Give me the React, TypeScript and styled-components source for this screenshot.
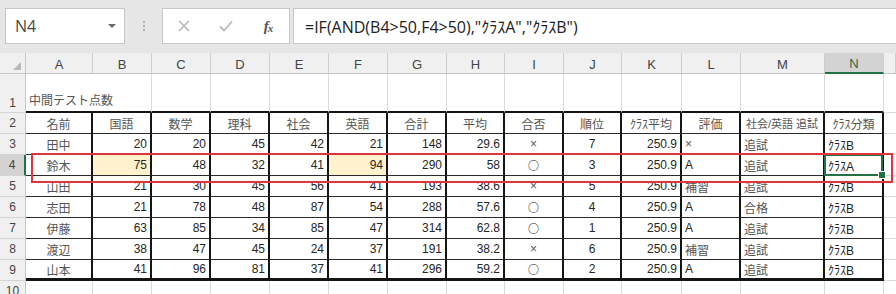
import { FC } from "react";
import styled, { createGlobalStyle } from "styled-components";

const GlobalStyle = createGlobalStyle`
  html, body {
    margin: 0;
    padding: 0;
    background: #e6e6e6;
    overflow: hidden;
  }
  * {
    box-sizing: border-box;
  }
`;

const Page = styled.div`
  width: 896px;
  height: 294px;
  overflow: hidden;
  background: #e6e6e6;
  font-family: "Liberation Sans", "Noto Sans CJK JP", sans-serif;
`;

/* ---------- formula toolbar ---------- */

const Toolbar = styled.div`
  display: flex;
  align-items: stretch;
  height: 53px;
  padding: 8px 0 9px 5px;
`;

const NameBox = styled.div`
  width: 120px;
  display: flex;
  align-items: center;
  justify-content: space-between;
  padding: 0 8px 0 9px;
  background: #fff;
  border: 1px solid #c6c6c6;
  color: #4a4a4a;
  font-family: "Open Sans", "Liberation Sans", sans-serif;
  font-size: 16px;
`;

const Caret = styled.span`
  width: 0;
  height: 0;
  border-left: 4px solid transparent;
  border-right: 4px solid transparent;
  border-top: 4px solid #6a6a6a;
`;

const Grip = styled.div`
  width: 37px;
  display: flex;
  flex-direction: column;
  align-items: center;
  justify-content: center;
  gap: 2px;

  span {
    width: 2px;
    height: 2px;
    border-radius: 1px;
    background: #9a9a9a;
  }
`;

const IconBox = styled.div`
  width: 128px;
  display: flex;
  align-items: center;
  background: #fff;
  border: 1px solid #c6c6c6;
`;

const IconSlot = styled.div`
  width: 42px;
  display: flex;
  align-items: center;
  justify-content: center;
`;

const Fx = styled.span`
  font-family: "Liberation Serif", serif;
  font-style: italic;
  font-weight: bold;
  font-size: 15px;
  color: #555;
  letter-spacing: -1px;

  sub {
    font-size: 11px;
    vertical-align: -1px;
  }
`;

const FormulaBox = styled.div`
  flex: 1;
  margin-left: 3px;
  margin-right: -2px;
  display: flex;
  align-items: center;
  padding-left: 11px;
  background: #fff;
  border: 1px solid #c6c6c6;
  color: #222;
  font-family: "Open Sans", "Noto Sans CJK JP", sans-serif;
  font-size: 16px;
  white-space: nowrap;
`;

/* ---------- sheet ---------- */

const Sheet = styled.div`
  position: relative;
  display: grid;
  grid-template-columns: 26px 67px 59px 59px 59px 59px 59px 59px 58px 59px 58px 60px 59px 84px 59px 1fr;
  grid-template-rows: 21px 39px repeat(8, 21px) 21px;
  background: #fff;
`;

const Corner = styled.div`
  position: relative;
  background: #f0f0f0;
  border-right: 1px solid #c6c6c6;
  border-bottom: 1px solid #c6c6c6;

  &::after {
    content: "";
    position: absolute;
    right: 4px;
    bottom: 3px;
    width: 0;
    height: 0;
    border-left: 8px solid transparent;
    border-bottom: 8px solid #b8b8b8;
  }
`;

const ColHead = styled.div<{ $active?: boolean }>`
  display: flex;
  align-items: center;
  justify-content: center;
  padding-top: 2px;
  background: ${(p) => (p.$active ? "#d3d3d3" : "#f0f0f0")};
  border-right: 1px solid #cdcdcd;
  border-bottom: ${(p) => (p.$active ? "2px solid #217346" : "1px solid #c6c6c6")};
  color: ${(p) => (p.$active ? "#2a6a45" : "#444")};
  font-size: 13px;
`;

const RowHead = styled.div<{ $active?: boolean; $tall?: boolean }>`
  display: flex;
  align-items: ${(p) => (p.$tall ? "flex-end" : "center")};
  justify-content: center;
  padding-bottom: ${(p) => (p.$tall ? "2px" : "0")};
  background: ${(p) => (p.$active ? "#d3d3d3" : "#f0f0f0")};
  border-right: ${(p) => (p.$active ? "2px solid #217346" : "1px solid #c6c6c6")};
  border-bottom: 1px solid #d4d4d4;
  color: #444;
  font-size: 12px;
`;

type Align = "left" | "center" | "right";

const justify = { left: "flex-start", center: "center", right: "flex-end" };

const Cell = styled.div<{
  $align?: Align;
  $fill?: string;
  $right?: string;
  $bottom?: string;
  $tall?: boolean;
  $size?: number;
  $span?: number;
  $muted?: boolean;
  $cjk?: boolean;
  $selected?: boolean;
}>`
  position: relative;
  grid-column: span ${(p) => p.$span ?? 1};
  display: flex;
  align-items: ${(p) => (p.$tall ? "flex-end" : "center")};
  justify-content: ${(p) => justify[p.$align ?? "left"]};
  padding: ${(p) => (p.$tall ? "0 3px 3px" : "0 3px")};
  background: ${(p) => p.$fill ?? "#fff"};
  border-right: ${(p) => p.$right ?? "1px solid #dadada"};
  border-bottom: ${(p) => p.$bottom ?? "1px solid #dadada"};
  color: ${(p) => (p.$muted ? "#555" : "#262626")};
  font-family: ${(p) =>
    p.$cjk ? `"Noto Sans CJK JP", sans-serif` : `"Liberation Sans", "Noto Sans CJK JP", sans-serif`};
  font-weight: ${(p) => (p.$cjk ? 700 : 400)};
  font-size: ${(p) => p.$size ?? 12}px;
  white-space: nowrap;

  ${(p) =>
    p.$selected &&
    `
    &::after {
      content: "";
      position: absolute;
      inset: -1px;
      border: 2px solid #217346;
      pointer-events: none;
    }
    &::before {
      content: "";
      position: absolute;
      right: -4px;
      bottom: -4px;
      width: 6px;
      height: 6px;
      background: #217346;
      border: 1px solid #fff;
      z-index: 2;
    }
  `}
`;

const Highlight = styled.div`
  position: absolute;
  left: 31px;
  top: 100px;
  width: 862px;
  height: 30px;
  border: 2px solid #e2343c;
  pointer-events: none;
  z-index: 3;
`;

const columns = ["A", "B", "C", "D", "E", "F", "G", "H", "I", "J", "K", "L", "M", "N"];

const aligns: Align[] = [
  "center", "right", "right", "right", "right", "right", "right", "right",
  "center", "center", "right", "left", "left", "left",
];

const header = [
  "名前", "国語", "数学", "理科", "社会", "英語", "合計", "平均",
  "合否", "順位", "ｸﾗｽ平均", "評価", "社会/英語 追試", "ｸﾗｽ分類",
];

const rows: string[][] = [
  ["田中", "20", "20", "45", "42", "21", "148", "29.6", "×", "7", "250.9", "×", "追試", "ｸﾗｽB"],
  ["鈴木", "75", "48", "32", "41", "94", "290", "58", "○", "3", "250.9", "A", "追試", "ｸﾗｽA"],
  ["山田", "21", "30", "45", "56", "41", "193", "38.6", "×", "5", "250.9", "補習", "追試", "ｸﾗｽB"],
  ["志田", "21", "78", "48", "87", "54", "288", "57.6", "○", "4", "250.9", "A", "合格", "ｸﾗｽB"],
  ["伊藤", "63", "85", "34", "85", "47", "314", "62.8", "○", "1", "250.9", "A", "追試", "ｸﾗｽB"],
  ["渡辺", "38", "47", "45", "24", "37", "191", "38.2", "×", "6", "250.9", "補習", "追試", "ｸﾗｽB"],
  ["山本", "41", "96", "81", "37", "41", "296", "59.2", "○", "2", "250.9", "A", "追試", "ｸﾗｽB"],
];

const thick = "2px solid #151515";
const thin = "1px solid #2a2a2a";

const mutedCols = [0, 12];

const App: FC = () => {
  return (
    <Page>
      <GlobalStyle />
      <Toolbar>
        <NameBox>
          N4
          <Caret />
        </NameBox>
        <Grip>
          <span />
          <span />
          <span />
        </Grip>
        <IconBox>
          <IconSlot>
            <svg width="14" height="14" viewBox="0 0 14 14">
              <path d="M2 2 L12 12 M12 2 L2 12" stroke="#b9b9b9" strokeWidth="1.6" />
            </svg>
          </IconSlot>
          <IconSlot>
            <svg width="16" height="14" viewBox="0 0 16 14">
              <path d="M2 7.5 L6 11.5 L14 2.5" stroke="#b9b9b9" strokeWidth="1.8" fill="none" />
            </svg>
          </IconSlot>
          <IconSlot>
            <Fx>
              f<sub>x</sub>
            </Fx>
          </IconSlot>
        </IconBox>
        <FormulaBox>=IF(AND(B4&gt;50,F4&gt;50),"ｸﾗｽA","ｸﾗｽB")</FormulaBox>
      </Toolbar>

      <Sheet>
        <Corner />
        {columns.map((c) => (
          <ColHead key={c} $active={c === "N"}>
            {c}
          </ColHead>
        ))}
        <ColHead>&nbsp;</ColHead>

        {/* row 1: title overflows across A and B */}
        <RowHead $tall>1</RowHead>
        <Cell $tall $span={2} $bottom={thick} $muted>
          中間テスト点数
        </Cell>
        {columns.slice(2).map((c) => (
          <Cell key={c} $tall $bottom={thick} />
        ))}
        <Cell $right="none" />

        {/* row 2 */}
        <RowHead>2</RowHead>
        {header.map((h, i) => (
          <Cell
            key={h}
            $align="center"
            $right={thick}
            $bottom={thin}
            $muted
            $size={i === 12 ? 11 : 12}
          >
            {h}
          </Cell>
        ))}
        <Cell $right="none" />

        {/* rows 3-9 */}
        {rows.map((r, ri) => {
          const rowNo = ri + 3;
          return [
            <RowHead key={`h${rowNo}`} $active={rowNo === 4}>
              {rowNo}
            </RowHead>,
            ...r.map((v, ci) => (
              <Cell
                key={`${rowNo}-${ci}`}
                $align={aligns[ci]}
                $right={thick}
                $bottom={rowNo === 9 ? "3px solid #151515" : thin}
                $fill={rowNo === 4 && (ci === 1 || ci === 5) ? "#fff2cc" : undefined}
                $muted={mutedCols.includes(ci) || v === "補習" || v === "×"}
                $cjk={v === "○"}
                $size={v === "○" ? 11 : 12}
                $selected={rowNo === 4 && ci === 13}
              >
                {v}
              </Cell>
            )),
            <Cell key={`o${rowNo}`} $right="none" />,
          ];
        })}

        {/* row 10 */}
        <RowHead>10</RowHead>
        {columns.map((c) => (
          <Cell key={c} />
        ))}
        <Cell $right="none" />

        <Highlight />
      </Sheet>
    </Page>
  );
};

export default App;
